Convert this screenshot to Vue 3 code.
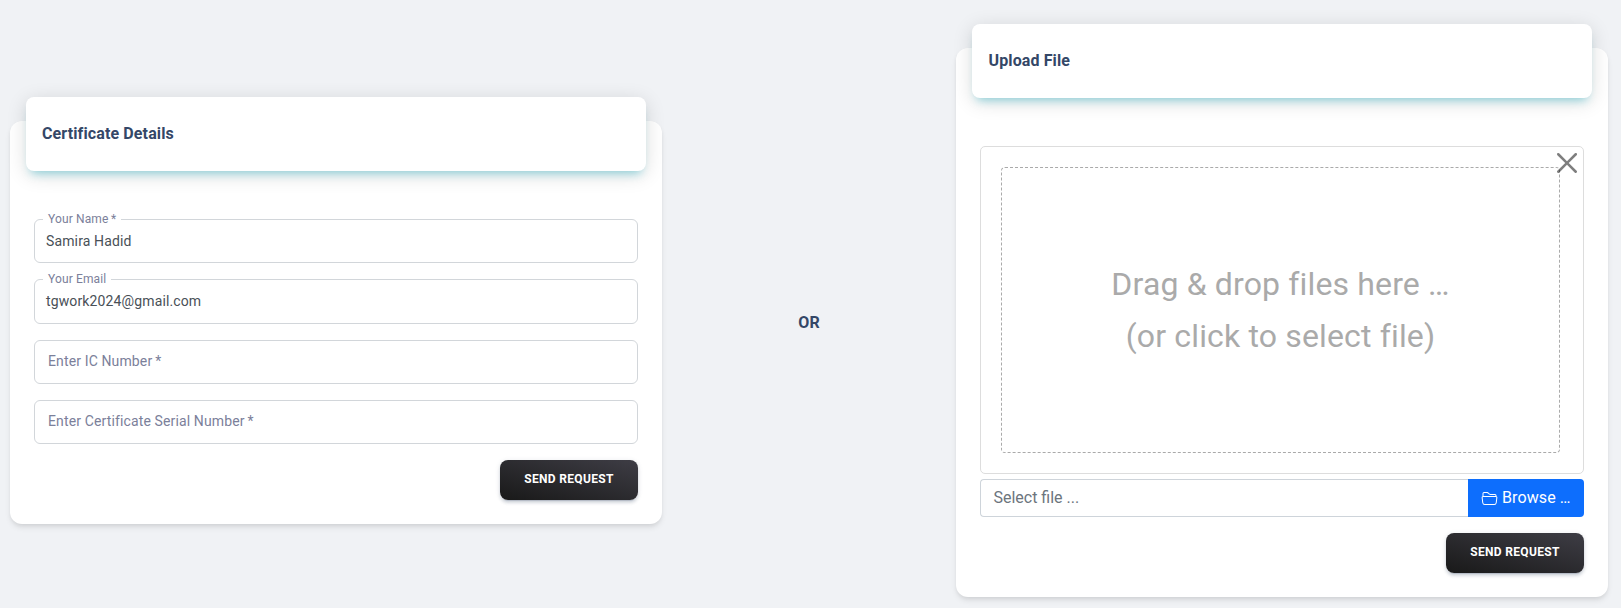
<script setup>
const fields = [
  { label: 'Your Name\u2009*', value: 'Samira Hadid' },
  { label: 'Your Email', value: 'tgwork2024@gmail.com' },
  { label: 'Enter IC Number\u2009*', value: '' },
  { label: 'Enter Certificate Serial Number\u2009*', value: '' },
]
</script>

<template>
  <main class="page">
    <section class="card">
      <header class="card-head">Certificate Details</header>
      <form class="card-body form" @submit.prevent>
        <div v-for="f in fields" :key="f.label" class="field">
          <template v-if="f.value">
            <span class="float-label">{{ f.label }}</span>
            <span class="value">{{ f.value }}</span>
          </template>
          <span v-else class="placeholder">{{ f.label }}</span>
        </div>
        <button class="send">Send Request</button>
      </form>
    </section>

    <div class="or">OR</div>

    <section class="card upload">
      <header class="card-head">Upload File</header>
      <form class="card-body" @submit.prevent>
        <div class="preview">
          <div class="drop">
            <div>Drag &amp; drop files here …</div>
            <div>(or click to select file)</div>
          </div>
          <svg class="close" viewBox="0 0 16 16">
            <path d="M.293.293a1 1 0 0 1 1.414 0L8 6.586 14.293.293a1 1 0 1 1 1.414 1.414L9.414 8l6.293 6.293a1 1 0 0 1-1.414 1.414L8 9.414l-6.293 6.293a1 1 0 0 1-1.414-1.414L6.586 8 .293 1.707a1 1 0 0 1 0-1.414z" />
          </svg>
        </div>
        <div class="picker">
          <div class="file-name">Select file ...</div>
          <div class="browse">
            <svg class="folder" viewBox="0 0 16 16">
              <path d="M1 3.5A1.5 1.5 0 0 1 2.5 2h2.764c.958 0 1.76.56 2.311 1.184C7.985 3.648 8.48 4 9 4h4.5A1.5 1.5 0 0 1 15 5.5v.64c.57.265.94.876.856 1.546l-.64 5.124A2.5 2.5 0 0 1 12.733 15H3.266a2.5 2.5 0 0 1-2.481-2.19l-.64-5.124A1.5 1.5 0 0 1 1 6.14V3.5zM2 6h12v-.5a.5.5 0 0 0-.5-.5H9c-.964 0-1.71-.629-2.174-1.154C6.374 3.334 5.82 3 5.264 3H2.5a.5.5 0 0 0-.5.5V6zm-.367 1a.5.5 0 0 0-.496.562l.64 5.124A1.5 1.5 0 0 0 3.266 14h9.468a1.5 1.5 0 0 0 1.489-1.314l.64-5.124A.5.5 0 0 0 14.367 7H1.633z" />
            </svg>
            <span>Browse …</span>
          </div>
        </div>
        <button class="send">Send Request</button>
      </form>
    </section>
  </main>
</template>

<style>
body {
  background: #f0f2f5;
}
</style>

<style scoped>
.page,
.page * {
  box-sizing: border-box;
}
.page {
  display: grid;
  grid-template-columns: 652px 1fr 652px;
  align-items: center;
  height: 608px;
  padding: 37px 13px 0 10px;
  background: #f0f2f5;
  font-family: Roboto, "Liberation Sans", sans-serif;
  overflow: hidden;
}
.card {
  background: #fff;
  border-radius: 12px;
  box-shadow: 0 4px 6px -1px rgba(0, 0, 0, 0.1), 0 2px 4px -1px rgba(0, 0, 0, 0.06);
}
.card-head {
  position: relative;
  height: 74px;
  margin: -24px 16px 0;
  padding: 24px 16px;
  border-radius: 8px;
  background: #fff;
  color: #344767;
  font-size: 16px;
  line-height: 26px;
  font-weight: 700;
  letter-spacing: 0.12px;
  box-shadow: 0 4px 20px 0 rgba(0, 0, 0, 0.14), 0 7px 10px -5px rgba(0, 188, 212, 0.4);
}
.upload .card-head {
  padding-left: 16.5px;
}
.card-body {
  display: flex;
  flex-direction: column;
  padding: 48px 24px 24px;
}
.form {
  gap: 16px;
  padding-top: 48.2px;
}
.form .send {
  margin-top: 0;
}
.field {
  position: relative;
  height: 44.15px;
  padding: 0 11px;
  border: 1px solid #d2d6da;
  border-radius: 6px;
  font-size: 14px;
  line-height: 42px;
  letter-spacing: 0.13px;
}
.value {
  color: #495057;
}
.placeholder {
  display: block;
  margin: -1px 0 0 2px;
  color: #7b809a;
}
.float-label {
  position: absolute;
  top: -8px;
  left: 8px;
  padding: 0 5px;
  background: #fff;
  color: #7b809a;
  font-size: 12px;
  line-height: 14px;
}
.send {
  align-self: flex-end;
  width: 138px;
  height: 40px;
  margin-top: 16px;
  padding: 0 0 2px;
  border: 0;
  border-radius: 8px;
  background: linear-gradient(195deg, #3e3d45, #191919);
  color: #fff;
  font: 700 12px/18px Roboto, sans-serif;
  letter-spacing: 0.34px;
  text-transform: uppercase;
  box-shadow: 0 3px 3px 0 rgba(52, 71, 103, 0.15), 0 3px 1px -2px rgba(52, 71, 103, 0.2), 0 1px 5px 0 rgba(52, 71, 103, 0.15);
}
.or {
  text-align: center;
  color: #344767;
  font-size: 16px;
  line-height: 26px;
  font-weight: 700;
}
.preview {
  position: relative;
  height: 328px;
  padding: 20px 23px 20px 20px;
  border: 1px solid #ddd;
  border-radius: 5px;
}
.drop {
  display: flex;
  flex-direction: column;
  align-items: center;
  justify-content: center;
  height: 286px;
  border: 1px dashed #aaa;
  border-radius: 4px;
  color: #aaa;
  font-size: 32px;
  line-height: 52px;
  letter-spacing: 0.15px;
}
.close {
  position: absolute;
  top: 6px;
  right: 6px;
  width: 20px;
  height: 20px;
  fill: #000;
  opacity: 0.5;
}
.picker {
  display: flex;
  height: 38px;
  margin-top: 5px;
  font-size: 16px;
  line-height: 36px;
}
.file-name {
  flex: 1;
  padding-left: 12.4px;
  border: 1px solid #ced4da;
  border-right: 0;
  border-radius: 4px 0 0 4px;
  color: #6c757d;
}
.browse {
  display: flex;
  align-items: center;
  gap: 4px;
  width: 116px;
  padding-left: 13px;
  border-radius: 0 4px 4px 0;
  background: #0d6efd;
  color: #fff;
  letter-spacing: 0.1px;
  white-space: nowrap;
}
.folder {
  width: 17px;
  height: 16px;
  fill: #fff;
}
</style>
